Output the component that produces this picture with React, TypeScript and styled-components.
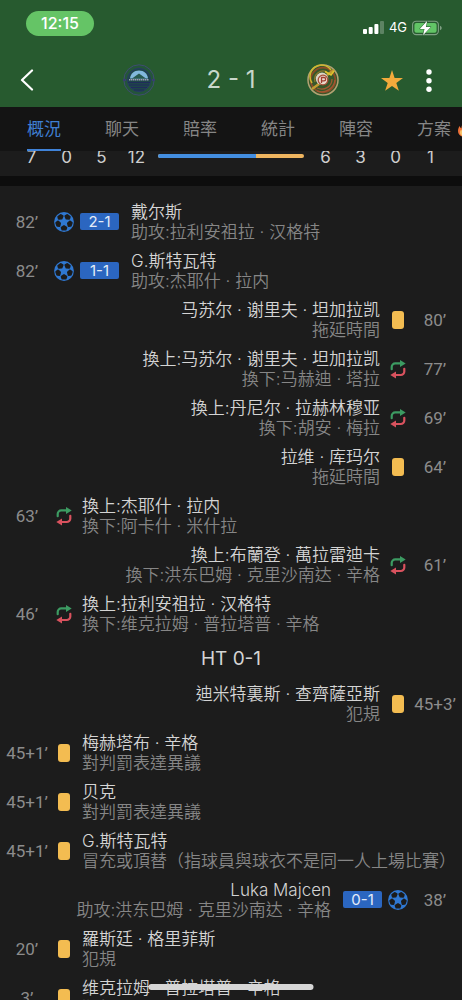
import React from "react";
import styled, { createGlobalStyle } from "styled-components";

const cjk = `"Noto Sans CJK TC", "Noto Sans CJK SC", sans-serif`;

const GlobalStyle = createGlobalStyle`
  * { box-sizing: border-box; }
  body {
    margin: 0;
    background: #1c1c1c;
    color: #d2d2d2;
    font-family: Inter, ${cjk};
    font-size: 17px;
    overflow: hidden;
  }
  button {
    margin: 0;
    padding: 0;
    border: 0;
    background: none;
    font: inherit;
    color: inherit;
  }
  svg { display: block; flex: none; }
`;

const Screen = styled.div`
  display: flex;
  flex-direction: column;
  height: 100vh;
  overflow: hidden;
`;

const Header = styled.header`
  flex: none;
  background: #275a2f;
`;

const StatusBar = styled.div`
  display: flex;
  align-items: center;
  justify-content: space-between;
  padding: 11px 20px 0 26px;
`;

const Clock = styled.div`
  width: 68px;
  height: 25px;
  border-radius: 13px;
  background: #65c466;
  color: #fff;
  font-size: 16px;
  font-weight: 500;
  line-height: 25px;
  text-align: center;
`;

const StatusIcons = styled.div`
  display: flex;
  align-items: center;
  gap: 5px;
  padding-top: 8px;
  color: #fff;
  font-size: 13px;
  line-height: 17px;
`;

const NavBar = styled.div`
  display: flex;
  align-items: center;
  height: 54px;
  margin-top: 17px;
  padding: 0 30px 0 20px;
`;

const NavSide = styled.div<{ $end?: boolean }>`
  display: flex;
  flex: 1;
  align-items: center;
  justify-content: ${(p) => (p.$end ? "flex-end" : "flex-start")};
  gap: 22px;
`;

const IconButton = styled.button`
  display: flex;
`;

const Match = styled.div`
  display: flex;
  align-items: center;
  justify-content: space-between;
  width: 216px;
  margin-left: 10px;
`;

const Score = styled.h1`
  margin: 0;
  color: #c9d7cb;
  font-size: 24px;
  font-weight: 400;
  line-height: 32px;
`;

const Tabs = styled.nav`
  display: flex;
  flex: none;
  height: 44px;
  padding-left: 5px;
  overflow: hidden;
  background: #141414;
`;

const Tab = styled.button<{ $active?: boolean }>`
  position: relative;
  display: flex;
  flex: none;
  align-items: center;
  height: 44px;
  gap: 7px;
  padding: 0 22px;
  color: ${(p) => (p.$active ? "#3f7fd2" : "#868686")};
  line-height: 24px;

  &::after {
    content: "";
    position: absolute;
    right: 22px;
    bottom: 0;
    left: 22px;
    height: 2px;
    background: ${(p) => (p.$active ? "#3f82d8" : "transparent")};
  }
`;

const Stats = styled.section`
  display: flex;
  flex: none;
  align-items: flex-start;
  height: 25px;
  padding: 0 14px;
  overflow: hidden;
  background: #1c1c1c;
`;

const StatValue = styled.span`
  width: 35px;
  margin-top: -5px;
  color: #cfcfcf;
  line-height: 22px;
  text-align: center;
`;

const StatBar = styled.div`
  display: flex;
  flex: 1;
  height: 4px;
  margin: 3px 4px 0;
  border-radius: 2px;
  overflow: hidden;
  background: #efb55f;
`;

const StatFill = styled.div`
  background: #438ee0;
`;

const Divider = styled.div`
  flex: none;
  height: 10px;
  background: #0d0d0d;
`;

const Events = styled.ul`
  flex: none;
  margin: 0;
  padding: 11px 0 0;
  list-style: none;
`;

const Event = styled.li<{ $away?: boolean }>`
  display: flex;
  flex-direction: ${(p) => (p.$away ? "row-reverse" : "row")};
  align-items: center;
  height: 49px;
  text-align: ${(p) => (p.$away ? "right" : "left")};
`;

const Minute = styled.span`
  flex: none;
  width: 54px;
  color: #8c8c8c;
  font-family: Roboto, ${cjk};
  line-height: 20px;
  text-align: center;
  white-space: nowrap;
`;

const Marker = styled.span`
  display: flex;
  flex: none;
  align-items: center;
  justify-content: center;
  width: 20px;
`;

const Card = styled.span`
  width: 12px;
  height: 18px;
  border-radius: 3px;
  background: #f3bc51;
`;

const GoalScore = styled.span<{ $away?: boolean }>`
  flex: none;
  width: 39px;
  height: 17px;
  margin: ${(p) => (p.$away ? "0 6px 0 4px" : "0 4px 0 6px")};
  border-radius: 2px;
  background: #2b66c0;
  color: #e4ecf8;
  font-size: 15px;
  line-height: 17px;
  text-align: center;
`;

const Details = styled.div`
  margin: 0 8px;
  font-weight: 350;
  line-height: 20px;
  white-space: nowrap;
`;

const Player = styled.div`
  color: #d4d4d4;
`;

const Note = styled.div`
  color: #868686;
`;

const HalfTime = styled.li`
  height: 41px;
  color: #d4d4d4;
  font-size: 19px;
  line-height: 41px;
  text-align: center;
`;

const HomeIndicator = styled.div`
  position: fixed;
  bottom: 10px;
  left: 50%;
  width: 165px;
  height: 6px;
  border-radius: 3px;
  background: #d6d6d6;
  transform: translateX(-50%);
`;

const Signal = () => (
  <svg width="21" height="13" viewBox="0 0 21 13" fill="#fff">
    <rect x="0" y="8" width="4" height="5" rx="1" />
    <rect x="5.7" y="6" width="4" height="7" rx="1" />
    <rect x="11.4" y="3" width="4" height="10" rx="1" />
    <rect x="17" y="0" width="4" height="13" rx="1" opacity=".25" />
  </svg>
);

const Battery = () => (
  <svg width="30" height="16" viewBox="0 0 30 16">
    <rect x=".6" y="1.2" width="25.8" height="13.4" rx="3.6" fill="none" stroke="#7f9f83" strokeWidth="1.1" />
    <rect x="2.4" y="3" width="22.2" height="9.8" rx="2" fill="#62c466" />
    <path d="M28 5.8v4.4c1.3-.5 1.7-1.2 1.7-2.2s-.4-1.7-1.7-2.2z" fill="#7f9f83" />
    <path d="M15.2.8 7.8 8.9h4.7l-1.5 6.3 7.8-8.3h-4.9z" fill="#fff" stroke="#275a2f" strokeWidth="1" paintOrder="stroke" />
  </svg>
);

const Back = () => (
  <svg width="14" height="22" viewBox="0 0 14 22" fill="none" stroke="#fff" strokeWidth="2.2" strokeLinecap="round" strokeLinejoin="round">
    <path d="M12 1.5 2 11l10 9.5" />
  </svg>
);

const HomeLogo = () => (
  <svg width="32" height="32" viewBox="0 0 32 32">
    <circle cx="16" cy="16" r="15.2" fill="#24553a" stroke="#3f4c71" strokeWidth="1" />
    <circle cx="16" cy="16" r="11.5" fill="#1e4548" stroke="#273967" strokeWidth="1" />
    <path d="M7 14.500C7.500 9.500 11 6.500 16 6.500s8.500 3 9 8z" fill="#82b8dd" />
    <path d="M9 14.500 16 9.500l7 5z" fill="#285a50" />
    <path d="M6 15.800h20" stroke="#9b9fb4" strokeWidth="1.4" strokeDasharray="1.5 .5" />
    <path d="M5 18.500h22M6 21h20M8 23.500h16M11 26h10" stroke="#202c5c" strokeWidth="1.2" />
    <path d="M0 16h3M29 16h3" stroke="#363d70" strokeWidth="2" />
  </svg>
);

const AwayLogo = () => (
  <svg width="32" height="32" viewBox="0 0 32 32" fill="none">
    <circle cx="16" cy="16" r="15" fill="#38582b" stroke="#b3a273" strokeWidth="1.5" />
    <circle cx="16" cy="16" r="12.3" stroke="#8d4b27" strokeWidth="1.7" />
    <path d="M5 19A11.5 11.5 0 0 1 24 6" stroke="#cfb72f" strokeWidth="1.6" />
    <path d="M8 18a8.500 8.500 0 0 1 12-10" stroke="#8c792e" strokeWidth="1.2" />
    <path d="M5 25 12 20M20 11l7-5" stroke="#c29b30" strokeWidth="2.5" />
    <path d="M18 7.500l6 3.500 3-4" stroke="#e0c52d" strokeWidth="1.6" />
    <path d="M10 24c7 3 15-1 15-9M10 27c9 3 17-3 18-11" stroke="#a25932" strokeWidth="1.3" />
    <circle cx="15" cy="14.8" r="6.2" fill="#dcd4c5" />
    <circle cx="16" cy="16" r="4.8" fill="#e9d9cc" stroke="#a64e36" strokeWidth="1.3" />
    <path d="M14.500 19v-5.500h2.500a1.600 1.600 0 0 1 0 3.300h-2.500" stroke="#a03e30" strokeWidth="1.3" />
  </svg>
);

const Star = () => (
  <svg width="24" height="24" viewBox="0 0 24 24">
    <path d="M12 2l2.600 8H23l-6.700 4.900 2.600 7.900L12 18l-6.900 4.800 2.600-7.900L1 10h8.400z" fill="#f3aa3c" />
  </svg>
);

const More = () => (
  <svg width="6" height="24" viewBox="0 0 6 24" fill="#fff">
    <circle cx="3" cy="4" r="2.7" />
    <circle cx="3" cy="12.7" r="2.7" />
    <circle cx="3" cy="21.3" r="2.7" />
  </svg>
);

const Flame = () => (
  <svg width="13" height="16" viewBox="0 0 13 16">
    <path d="M7 0c1 3 5.500 5 5.500 9.500S9.500 16 6.500 16 0 14 0 10c0-2 .8-3.800 1.600-5 .4 1.200 1 2 1.800 2.200C3.500 4 5 2 7 0z" fill="#ee7138" />
    <path d="M7 5c.5 2 3.500 3.200 3.500 6.500s-2.300 4-4 4-4.500-1-4.500-4c0-1.500.7-2.500 1.200-3 .3.800.7 1.200 1.200 1.300C4.600 8 5.800 6 7 5z" fill="#f8c46a" />
  </svg>
);

const Ball = () => (
  <svg width="20" height="20" viewBox="0 0 20 20">
    <circle cx="10" cy="10" r="9.9" fill="#2f78d2" />
    {[0, 72, 144, 216, 288].map((angle) => (
      <g key={angle} transform={`rotate(${angle} 10 10)`} fill="#1c1c1c" stroke="#1c1c1c" strokeLinejoin="round">
        <path d="M10 14.300l2.200 1.300-.7 1.900H8.500l-.7-1.900z" strokeWidth="2.2" />
      </g>
    ))}
  </svg>
);

const Swap = () => (
  <svg width="16" height="20" viewBox="0 0 16 20" fill="none" strokeWidth="2.2">
    <path d="M1.700 10.200V8a3.600 3.600 0 0 1 3.600-3.600H11" stroke="#3c9b62" strokeLinecap="round" />
    <path d="M10 .9l5.700 3.500L10 7.900z" fill="#3c9b62" />
    <path d="M14.300 9.800v2.600a3.600 3.600 0 0 1-3.600 3.600H5" stroke="#d9525e" strokeLinecap="round" />
    <path d="M6 12.500.3 16 6 19.500z" fill="#d9525e" />
  </svg>
);

type Kind = "goal" | "card" | "swap";

interface MatchEvent {
  minute: string;
  kind: Kind;
  player: string;
  note: string;
  score?: string;
  away?: boolean;
}

const secondHalf: MatchEvent[] = [
  { minute: "82’", kind: "goal", score: "2-1", player: "戴尔斯", note: "助攻:拉利安祖拉 · 汉格特" },
  { minute: "82’", kind: "goal", score: "1-1", player: "G.斯特瓦特", note: "助攻:杰耶什 · 拉内" },
  { minute: "80’", kind: "card", away: true, player: "马苏尔 · 谢里夫 · 坦加拉凯", note: "拖延時間" },
  { minute: "77’", kind: "swap", away: true, player: "換上:马苏尔 · 谢里夫 · 坦加拉凯", note: "換下:马赫迪 · 塔拉" },
  { minute: "69’", kind: "swap", away: true, player: "換上:丹尼尔 · 拉赫林穆亚", note: "換下:胡安 · 梅拉" },
  { minute: "64’", kind: "card", away: true, player: "拉维 · 库玛尔", note: "拖延時間" },
  { minute: "63’", kind: "swap", player: "換上:杰耶什 · 拉内", note: "換下:阿卡什 · 米什拉" },
  { minute: "61’", kind: "swap", away: true, player: "換上:布蘭登 · 萬拉雷迪卡", note: "換下:洪东巴姆 · 克里沙南达 · 辛格" },
  { minute: "46’", kind: "swap", player: "換上:拉利安祖拉 · 汉格特", note: "換下:维克拉姆 · 普拉塔普 · 辛格" },
];

const firstHalf: MatchEvent[] = [
  { minute: "45+3’", kind: "card", away: true, player: "迪米特裏斯 · 查齊薩亞斯", note: "犯規" },
  { minute: "45+1’", kind: "card", player: "梅赫塔布 · 辛格", note: "對判罰表達異議" },
  { minute: "45+1’", kind: "card", player: "贝克", note: "對判罰表達異議" },
  { minute: "45+1’", kind: "card", player: "G.斯特瓦特", note: "冒充或頂替（指球員與球衣不是同一人上場比賽）" },
  { minute: "38’", kind: "goal", score: "0-1", away: true, player: "Luka Majcen", note: "助攻:洪东巴姆 · 克里沙南达 · 辛格" },
  { minute: "20’", kind: "card", player: "羅斯廷 · 格里菲斯", note: "犯規" },
  { minute: "3’", kind: "card", player: "维克拉姆 · 普拉塔普 · 辛格", note: "犯規" },
];

const markers: Record<Kind, React.ReactNode> = {
  goal: <Ball />,
  card: <Card />,
  swap: <Swap />,
};

const EventRow = ({ event }: { event: MatchEvent }) => (
  <Event $away={event.away}>
    <Minute>{event.minute}</Minute>
    <Marker>{markers[event.kind]}</Marker>
    {event.score && <GoalScore $away={event.away}>{event.score}</GoalScore>}
    <Details>
      <Player>{event.player}</Player>
      <Note>{event.note}</Note>
    </Details>
  </Event>
);

const tabs = ["概況", "聊天", "賠率", "統計", "陣容", "方案"];
const homeStats = [7, 0, 5, 12];
const awayStats = [6, 3, 0, 1];
const homeShare = 67;

export default function App() {
  return (
    <Screen>
      <GlobalStyle />
      <Header>
        <StatusBar>
          <Clock>12:15</Clock>
          <StatusIcons>
            <Signal />
            <span>4G</span>
            <Battery />
          </StatusIcons>
        </StatusBar>
        <NavBar>
          <NavSide>
            <IconButton aria-label="返回"><Back /></IconButton>
          </NavSide>
          <Match>
            <HomeLogo />
            <Score>2 - 1</Score>
            <AwayLogo />
          </Match>
          <NavSide $end>
            <IconButton aria-label="收藏"><Star /></IconButton>
            <IconButton aria-label="更多"><More /></IconButton>
          </NavSide>
        </NavBar>
      </Header>
      <Tabs>
        {tabs.map((tab, i) => (
          <Tab key={tab} $active={i === 0}>
            {tab}
            {i === tabs.length - 1 && <Flame />}
          </Tab>
        ))}
      </Tabs>
      <Stats>
        {homeStats.map((value, i) => <StatValue key={i}>{value}</StatValue>)}
        <StatBar>
          <StatFill style={{ width: `${homeShare}%` }} />
        </StatBar>
        {awayStats.map((value, i) => <StatValue key={i}>{value}</StatValue>)}
      </Stats>
      <Divider />
      <Events>
        {secondHalf.map((event, i) => <EventRow key={i} event={event} />)}
        <HalfTime>HT 0-1</HalfTime>
        {firstHalf.map((event, i) => <EventRow key={i} event={event} />)}
      </Events>
      <HomeIndicator />
    </Screen>
  );
}
